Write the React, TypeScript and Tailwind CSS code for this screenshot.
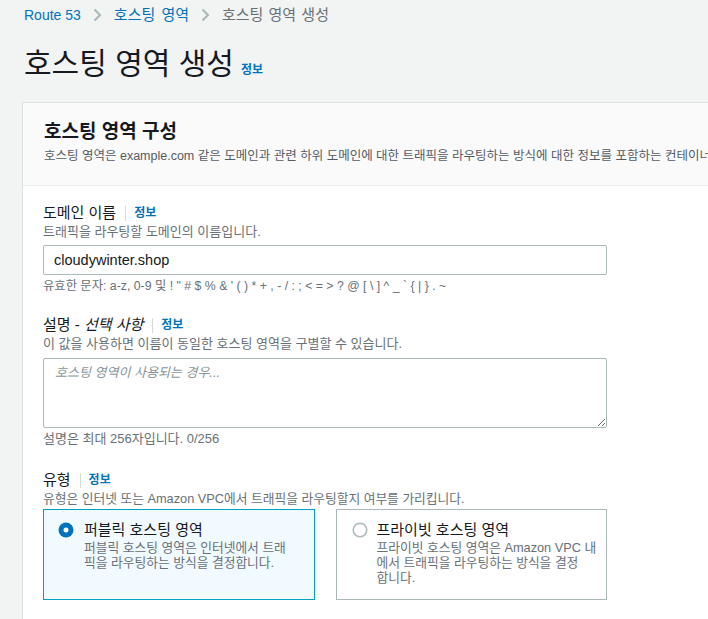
import React from 'react';

const Info = () => <span className="text-[12px] font-bold text-[#0073bb]">정보</span>;

const Chevron = () => (
  <svg width="9" height="14" viewBox="0 0 9 14" className="mx-[12px] shrink-0">
    <polyline points="1.5,1.5 7,7 1.5,12.5" fill="none" stroke="#aab7b8" strokeWidth="2" />
  </svg>
);

const FieldLabel = ({ children }: { children: React.ReactNode }) => (
  <div className="flex h-[20px] items-center text-[15px] text-[#16191f]">
    <span>{children}</span>
    <span className="ml-[9px] mr-[8px] h-[15px] w-px bg-[#d5dbdb]" />
    <Info />
  </div>
);

const Radio = ({ checked }: { checked?: boolean }) =>
  checked ? (
    <svg width="16" height="16" viewBox="0 0 16 16">
      <circle cx="8" cy="8" r="7.5" fill="#0073bb" />
      <circle cx="8" cy="8" r="2.5" fill="#ffffff" />
    </svg>
  ) : (
    <svg width="16" height="16" viewBox="0 0 16 16">
      <circle cx="8" cy="8" r="6.75" fill="#ffffff" stroke="#aab7b8" strokeWidth="1.5" />
    </svg>
  );

const TypeCard = ({
  checked,
  title,
  lines,
}: {
  checked?: boolean;
  title: string;
  lines: string[];
}) => (
  <div
    className={
      checked
        ? 'flex h-[91px] gap-[10px] border border-[#00a1c9] bg-[#f1faff] pl-[14px] pt-[10px]'
        : 'flex h-[91px] gap-[9px] border border-[#aab7b8] bg-white pl-[15px] pt-[10px]'
    }
  >
    <div className="flex h-[20px] items-center">
      <Radio checked={checked} />
    </div>
    <div>
      <div className="text-[15px] leading-[20px] text-[#16191f]">{title}</div>
      <div className="whitespace-nowrap text-[12.75px] leading-[15px] text-[#687078]">
        {lines.map((l) => (
          <div key={l}>{l}</div>
        ))}
      </div>
    </div>
  </div>
);

export default function App() {
  return (
    <div className="h-[619px] w-[708px] overflow-hidden bg-[#f2f3f3] [font-family:'Liberation_Sans','Noto_Sans_CJK_KR',sans-serif]">
      <nav className="flex h-[20px] items-center pl-[24px] pt-[10px] text-[14px] leading-[20px]">
        <span className="text-[#0073bb]">Route 53</span>
        <Chevron />
        <span className="text-[15px] text-[#0073bb] [word-spacing:2px]">호스팅 영역</span>
        <Chevron />
        <span className="text-[15px] text-[#687078] [word-spacing:1px]">호스팅 영역 생성</span>
      </nav>

      <div className="mt-[26px] flex items-baseline gap-[7px] pl-[24px]">
        <h1 className="text-[30px] leading-[36px] text-[#16191f]">호스팅 영역 생성</h1>
        <Info />
      </div>

      <div className="ml-[22px] mt-[20px] w-[760px] border border-[#dde1e1] bg-white">
        <div className="border-b border-[#eaeded] bg-[#fafafa] px-[21px] pb-[20px] pt-[17px]">
          <h2 className="text-[19px] font-bold leading-[24px] text-[#16191f]">호스팅 영역 구성</h2>
          <p className="mt-[3px] whitespace-nowrap text-[12.5px] leading-[18px] text-[#545b64]">
            호스팅 영역은 example.com 같은 도메인과 관련 하위 도메인에 대한 트래픽을 라우팅하는 방식에 대한 정보를 포함하는 컨테이너입니다.
          </p>
        </div>

        <div className="w-[584px] pl-[20px] pt-[17px]">
          <FieldLabel>도메인 이름</FieldLabel>
          <p className="text-[13px] leading-[18px] text-[#687078]">트래픽을 라우팅할 도메인의 이름입니다.</p>
          <input
            readOnly
            value="cloudywinter.shop"
            className="mt-[4px] h-[30px] w-full rounded-[2px] border border-[#aab7b8] bg-white px-[10px] text-[14.5px] text-[#16191f] outline-none"
          />
          <p className="mt-[2px] text-[12.3px] leading-[18px] text-[#687078]">
            유효한 문자: a-z, 0-9 및 ! " # $ % &amp; ' ( ) * + , - / : ; &lt; = &gt; ? @ [ \ ] ^ _ ` {'{'} | {'}'} . ~
          </p>

          <div className="mt-[20px]">
            <FieldLabel>
              설명 - <i>선택 사항</i>
            </FieldLabel>
          </div>
          <p className="text-[13px] leading-[18px] text-[#687078]">
            이 값을 사용하면 이름이 동일한 호스팅 영역을 구별할 수 있습니다.
          </p>
          <textarea
            placeholder="호스팅 영역이 사용되는 경우..."
            className="mt-[5px] block h-[70px] w-full rounded-[2px] border border-[#aab7b8] bg-white px-[11px] py-[4px] text-[13px] leading-[20px] text-[#16191f] outline-none placeholder:italic placeholder:text-[#879596]"
          />
          <p className="mt-[2px] text-[13px] leading-[18px] text-[#687078]">설명은 최대 256자입니다. 0/256</p>

          <div className="mt-[22px]">
            <FieldLabel>유형</FieldLabel>
          </div>
          <p className="text-[12.75px] leading-[18px] text-[#687078]">
            유형은 인터넷 또는 Amazon VPC에서 트래픽을 라우팅할지 여부를 가리킵니다.
          </p>
          <div className="mt-[1px] grid grid-cols-2 gap-[21px]">
            <TypeCard
              checked
              title="퍼블릭 호스팅 영역"
              lines={['퍼블릭 호스팅 영역은 인터넷에서 트래', '픽을 라우팅하는 방식을 결정합니다.']}
            />
            <TypeCard
              title="프라이빗 호스팅 영역"
              lines={['프라이빗 호스팅 영역은 Amazon VPC 내', '에서 트래픽을 라우팅하는 방식을 결정', '합니다.']}
            />
          </div>
          <div className="h-[40px]" />
        </div>
      </div>
    </div>
  );
}
